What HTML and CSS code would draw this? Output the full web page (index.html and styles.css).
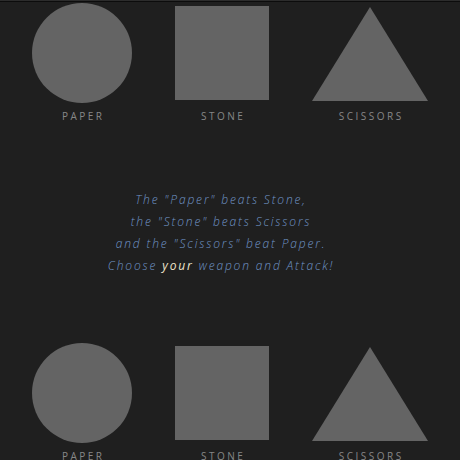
FILE: index.html
```html
<!DOCTYPE html>
<html lang="en">
<head>
<meta charset="utf-8">
<title>Paper Stone Scissors</title>
<link rel="stylesheet" href="styles.css">
</head>
<body>
<div class="page">
  <div class="weapons">
    <div class="weapon">
      <div class="shape-box"><div class="circle"></div></div>
      <div class="label">PAPER</div>
    </div>
    <div class="weapon">
      <div class="shape-box"><div class="square"></div></div>
      <div class="label">STONE</div>
    </div>
    <div class="weapon">
      <div class="shape-box"><svg class="triangle" width="116" height="94" viewBox="0 0 116 94"><polygon points="58,0 116,94 0,94" fill="#646464"/></svg></div>
      <div class="label">SCISSORS</div>
    </div>
  </div>

  <div class="rules">
    <p>The "Paper" beats Stone,</p>
    <p>the "Stone" beats Scissors</p>
    <p>and the "Scissors" beat Paper.</p>
    <p>Choose <span class="you">your</span> weapon and Attack!</p>
  </div>

  <div class="weapons">
    <div class="weapon">
      <div class="shape-box"><div class="circle"></div></div>
      <div class="label">PAPER</div>
    </div>
    <div class="weapon">
      <div class="shape-box"><div class="square"></div></div>
      <div class="label">STONE</div>
    </div>
    <div class="weapon">
      <div class="shape-box"><svg class="triangle" width="116" height="94" viewBox="0 0 116 94"><polygon points="58,0 116,94 0,94" fill="#646464"/></svg></div>
      <div class="label">SCISSORS</div>
    </div>
  </div>
</div>
</body>
</html>
```

FILE: styles.css
```css
html, body {
  margin: 0;
  padding: 0;
  height: 460px;
  overflow: hidden;
  background: #1f1f1f;
}

.page {
  height: 460px;
  box-sizing: border-box;
  border-top: 1px solid #2c2c2c;
  box-shadow: inset 0 1px 0 #0c0c0c;
  padding-top: 2px;
  font-family: "Open Sans", "DejaVu Sans", sans-serif;
}

.weapons {
  display: flex;
  justify-content: center;
  gap: 43px;
}

.weapon {
  display: flex;
  flex-direction: column;
  align-items: center;
}

.shape-box {
  height: 100px;
  display: flex;
  align-items: center;
  justify-content: center;
}

.circle {
  width: 100px;
  height: 100px;
  border-radius: 50%;
  background: #646464;
}

.square {
  width: 94px;
  height: 94px;
  background: #646464;
}

.triangle {
  display: block;
  margin-top: 2px;
}

.label {
  margin-top: 6px;
  font-size: 10px;
  line-height: 14px;
  letter-spacing: 2.5px;
  padding-left: 2.5px;
  color: #878787;
}

.rules {
  height: 220px;
  display: flex;
  flex-direction: column;
  align-items: center;
  justify-content: center;
  padding-right: 18px;
  padding-bottom: 1px;
  box-sizing: border-box;
}

.rules p {
  margin: 0;
  font-style: italic;
  font-weight: 300;
  font-size: 12px;
  line-height: 22px;
  letter-spacing: 1.85px;
  color: #7196c8;
}

.rules .you {
  color: #efe6cc;
  font-weight: 400;
}
```
